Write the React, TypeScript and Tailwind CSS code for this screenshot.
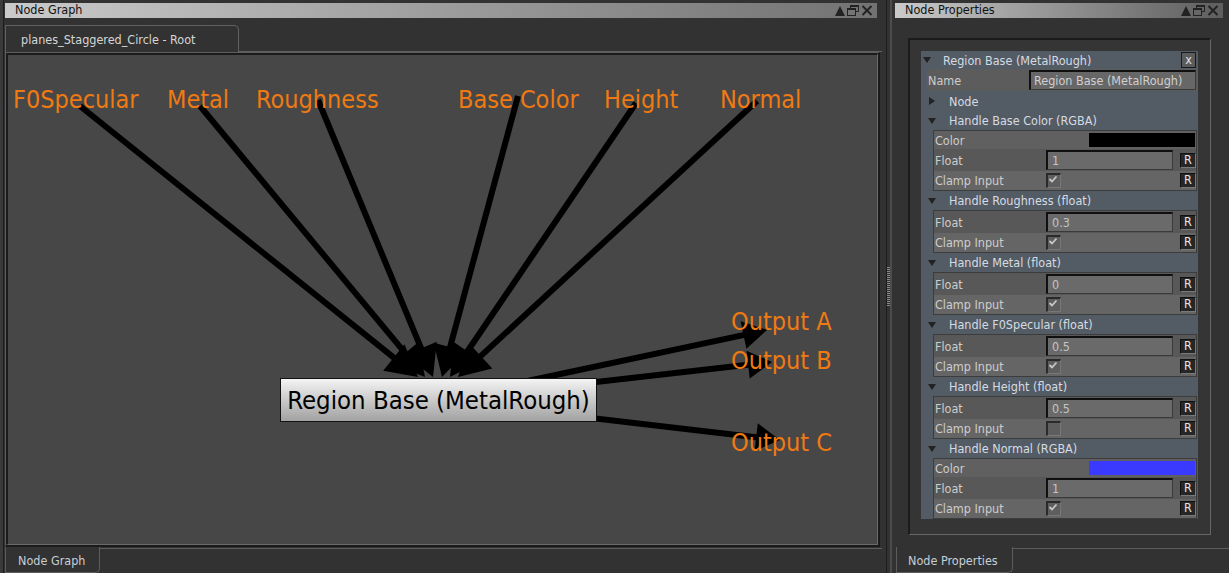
import React from "react";

const FONT = "font-['DejaVu_Sans_Condensed','DejaVu_Sans',sans-serif] font-stretch-condensed";

type Pt = [number, number];

function Arrow({ from, to, len, half }: { from: Pt; to: Pt; len: number; half: number }) {
    const dx = to[0] - from[0];
    const dy = to[1] - from[1];
    const d = Math.hypot(dx, dy);
    const ux = dx / d;
    const uy = dy / d;
    const bx = to[0] - ux * len;
    const by = to[1] - uy * len;
    const pts = `${to[0]},${to[1]} ${bx - uy * half},${by + ux * half} ${bx + uy * half},${by - ux * half}`;
    return (
        <g>
            <line x1={from[0]} y1={from[1]} x2={bx + ux * 2} y2={by + uy * 2} stroke="#000" strokeWidth={6} />
            <polygon points={pts} fill="#000" />
        </g>
    );
}

const inputs: [Pt, Pt][] = [
    [[80, 106], [418, 377]],
    [[200, 106], [425, 377]],
    [[318, 100], [433, 377]],
    [[518, 96], [442, 377]],
    [[636, 103], [450, 377]],
    [[757, 101], [458, 377]],
];

const outputs: Pt[] = [
    [767, 330],
    [772, 362],
    [780, 440],
];

function TitleIcons() {
    return (
        <div className="flex items-center gap-[2px]">
            <svg width="10" height="10" viewBox="0 0 10 10">
                <path d="M0 10 L5 0 L10 10 Z" fill="#222" />
            </svg>
            <svg width="12" height="11" viewBox="0 0 12 11">
                <path d="M3.5 3 V0.5 H11.5 V6.5 H8.5" fill="none" stroke="#222" />
                <rect x="3" y="0" width="9" height="2" fill="#222" />
                <rect x="0.5" y="3.5" width="8" height="7" fill="none" stroke="#222" />
                <rect x="0" y="3" width="9" height="2" fill="#222" />
            </svg>
            <svg width="12" height="11" viewBox="0 0 12 11">
                <path d="M1.5 1 L10.5 10 M10.5 1 L1.5 10" stroke="#222" strokeWidth="2" />
            </svg>
        </div>
    );
}

function TitleBar({ title, className }: { title: string; className: string }) {
    return (
        <div className={`h-[15px] flex items-center justify-between pl-[10px] pr-[4px] bg-linear-to-r from-[#cacaca] ${className}`}>
            <span className="text-[12.5px] leading-none text-[#111]">{title}</span>
            <TitleIcons />
        </div>
    );
}

function Down() {
    return (
        <svg width="8" height="6" viewBox="0 0 8 6">
            <path d="M0 0 H8 L4 6 Z" fill="#222" />
        </svg>
    );
}

function Right() {
    return (
        <svg width="6" height="8" viewBox="0 0 6 8">
            <path d="M0 0 L6 4 L0 8 Z" fill="#222" />
        </svg>
    );
}

function RButton() {
    return (
        <div className="ml-[7px] w-[16px] h-[15px] bg-[#262626] border border-t-[#111] border-l-[#111] border-r-[#7a7a7a] border-b-[#7a7a7a] flex items-center justify-center text-[#e4e4e4] leading-none">
            R
        </div>
    );
}

function FloatRow({ value }: { value: string }) {
    return (
        <div className="h-[22px] flex items-center bg-[#585858]">
            <span className="w-[112px] pl-px pt-[2px] text-[#cdcdcd]">Float</span>
            <div className="w-[127px] h-[20px] bg-[#6a6a6a] border-t-2 border-l-2 border-r border-b border-t-[#101010] border-l-[#101010] border-r-[#3a3a3a] border-b-[#3a3a3a] pl-[4px] pt-px flex items-center text-[#c4c4c4]">
                {value}
            </div>
            <RButton />
        </div>
    );
}

function ClampRow({ on }: { on: boolean }) {
    return (
        <div className="h-[19px] flex items-center bg-[#656565]">
            <span className="w-[112px] pl-px pt-[2px] text-[#cdcdcd]">Clamp Input</span>
            <div className="w-[15px] h-[15px] bg-[#5e5e5e] border-t-2 border-l-2 border-r border-b border-t-[#2a2a2a] border-l-[#2a2a2a] border-r-[#777] border-b-[#777]">
                {on && (
                    <svg width="11" height="11" viewBox="0 0 11 11">
                        <path d="M1.5 4 L4 6.5 L8.5 1.5" fill="none" stroke="#c8c8c8" strokeWidth="1.8" />
                    </svg>
                )}
            </div>
            <div className="flex-1" />
            <RButton />
        </div>
    );
}

function ColorRow({ color }: { color: string }) {
    return (
        <div className="h-[18px] flex items-center bg-[#606060]">
            <span className="pl-px pt-[2px] text-[#cdcdcd]">Color</span>
            <div className={`ml-auto mr-px w-[106px] h-[14px] ${color}`} />
        </div>
    );
}

function Group({ title, children }: { title: string; children: React.ReactNode }) {
    return (
        <>
            <div className="h-[19px] flex items-center">
                <div className="w-[28px] pl-[7px] flex items-center">
                    <Down />
                </div>
                <span className="pt-[2px] text-[#d6dbe1]">{title}</span>
            </div>
            <div className="ml-[12px] mr-px border border-[#3c3c3c] flex flex-col">{children}</div>
        </>
    );
}

function GraphCanvas() {
    const label = "absolute text-[25px] leading-[25px] text-[#f07a12] whitespace-nowrap";
    return (
        <div className="relative flex-1 bg-[#474747] overflow-hidden">
            <svg className="absolute inset-0" width="869" height="489">
                <g transform="translate(-8 -55)">
                    {inputs.map(([a, b], i) => (
                        <Arrow key={i} from={a} to={b} len={31} half={17} />
                    ))}
                    {outputs.map((b, i) => (
                        <Arrow key={i} from={[438, 400]} to={b} len={24} half={14} />
                    ))}
                </g>
            </svg>

            <div className={`${label} left-[5px] top-[32px]`}>F0Specular</div>
            <div className={`${label} left-[159px] top-[32px]`}>Metal</div>
            <div className={`${label} left-[248px] top-[32px]`}>Roughness</div>
            <div className={`${label} left-[450px] top-[32px]`}>Base Color</div>
            <div className={`${label} left-[596px] top-[32px]`}>Height</div>
            <div className={`${label} left-[712px] top-[32px]`}>Normal</div>
            <div className={`${label} left-[723px] top-[254px]`}>Output A</div>
            <div className={`${label} left-[723px] top-[293px]`}>Output B</div>
            <div className={`${label} left-[723px] top-[375px]`}>Output C</div>

            <div className="absolute left-[272px] top-[323px] w-[317px] h-[44px] border border-[#111] bg-linear-to-b from-[#f4f4f4] to-[#a2a2a2] flex items-center justify-center text-[25.5px] leading-[25px] text-black whitespace-nowrap">
                Region Base (MetalRough)
            </div>
        </div>
    );
}

export default function App() {
    return (
        <div className={`w-[1229px] h-[573px] flex bg-[#323232] overflow-hidden text-[12.5px] ${FONT}`}>
            {/* node graph panel */}
            <div className="w-[882px] h-full flex border-l-[3px] border-l-[#3a3a3a]">
                <div className="flex-1 flex flex-col border-l border-l-[#1d1d1d] pl-px">
                    <TitleBar title="Node Graph" className="mt-[3px] w-[872px] to-[#727272]" />
                    <div className="mt-[7px] h-[27px] flex">
                        <div className="w-[234px] border-t border-l border-r border-t-[#606060] border-l-[#606060] border-r-[#606060] rounded-tr-[5px] pl-[15px] pt-[2px] flex items-center text-[#d6d6d6]">
                            planes_Staggered_Circle - Root
                        </div>
                        <div className="flex-1 border-b border-b-[#606060]" />
                    </div>
                    <div className="w-[875px] h-[495px] flex border-t border-l border-r-2 border-b-2 border-t-[#5e5e5e] border-l-[#5e5e5e] border-r-[#1b1b1b] border-b-[#1b1b1b]">
                        <div className="flex-1 flex border-t-2 border-l-2 border-r border-b border-t-[#1b1b1b] border-l-[#1b1b1b] border-r-[#6a6a6a] border-b-[#6a6a6a]">
                            <GraphCanvas />
                        </div>
                    </div>
                    <div className="h-[26px] flex">
                        <div className="w-[95px] border-l border-r border-b border-l-[#5c5c5c] border-r-[#5c5c5c] border-b-[#5c5c5c] rounded-br-[5px] pl-[12px] pt-[3px] flex items-center text-[#c6ced8]">
                            Node Graph
                        </div>
                        <div className="flex-1 mt-px border-t border-t-[#5c5c5c]" />
                    </div>
                </div>
            </div>

            {/* splitter */}
            <div className="w-[13px] h-full flex justify-center">
                <div className="w-[6px] h-full border-l border-r-2 border-l-[#1c1c1c] border-r-[#4c4c4c] flex items-center justify-center">
                    <div className="w-[3px] flex flex-col gap-px">
                        {Array.from({ length: 20 }).map((_, i) => (
                            <div key={i} className="h-px bg-[#8a8a8a]" />
                        ))}
                    </div>
                </div>
            </div>

            {/* node properties panel */}
            <div className="w-[334px] h-full flex flex-col">
                <TitleBar title="Node Properties" className="mt-[3px] w-[328px] to-[#5e5e5e]" />
                <div className="mt-[20px] ml-[13px] w-[303px] h-[497px] bg-[#353535] border-t-2 border-l-2 border-r border-b border-t-[#1b1b1b] border-l-[#1b1b1b] border-r-[#666] border-b-[#666] pl-[11px] pt-[11px]">
                    <div className="w-[277px] bg-[#535b65] flex flex-col">
                        <div className="h-[18px] flex items-center">
                            <div className="w-[22px] pl-[2px] flex items-center">
                                <Down />
                            </div>
                            <span className="flex-1 pt-[2px] text-[#d6dbe1]">Region Base (MetalRough)</span>
                            <div className="mr-[2px] w-[15px] h-[16px] bg-[#5c5c5c] border border-[#1a1a1a] flex items-center justify-center leading-none text-[#e0e0e0]">
                                x
                            </div>
                        </div>
                        <div className="h-[22px] ml-[6px] bg-[#5c5c5c] flex items-center">
                            <span className="w-[102px] pl-px pt-[2px] text-[#cdcdcd]">Name</span>
                            <div className="w-[167px] h-[20px] bg-[#676767] border-t-2 border-l-2 border-r border-b border-t-[#101010] border-l-[#101010] border-r-[#3a3a3a] border-b-[#3a3a3a] pl-[3px] pt-px flex items-center text-[#d0d0d0] whitespace-nowrap">
                                Region Base (MetalRough)
                            </div>
                        </div>
                        <div className="h-[20px] flex items-center">
                            <div className="w-[28px] pl-[8px] flex items-center">
                                <Right />
                            </div>
                            <span className="pt-[2px] text-[#d6dbe1]">Node</span>
                        </div>
                        <Group title="Handle Base Color (RGBA)">
                            <ColorRow color="bg-black" />
                            <FloatRow value="1" />
                            <ClampRow on />
                        </Group>
                        <Group title="Handle Roughness (float)">
                            <FloatRow value="0.3" />
                            <ClampRow on />
                        </Group>
                        <Group title="Handle Metal (float)">
                            <FloatRow value="0" />
                            <ClampRow on />
                        </Group>
                        <Group title="Handle F0Specular (float)">
                            <FloatRow value="0.5" />
                            <ClampRow on />
                        </Group>
                        <Group title="Handle Height (float)">
                            <FloatRow value="0.5" />
                            <ClampRow on={false} />
                        </Group>
                        <Group title="Handle Normal (RGBA)">
                            <ColorRow color="bg-[#3a3aff]" />
                            <FloatRow value="1" />
                            <ClampRow on />
                        </Group>
                    </div>
                </div>
                <div className="mt-[12px] h-[26px] flex">
                    <div className="ml-px w-[117px] border-l border-r border-b border-l-[#5c5c5c] border-r-[#5c5c5c] border-b-[#5c5c5c] rounded-br-[5px] pl-[11px] pt-[3px] flex items-center text-[#c6ced8]">
                        Node Properties
                    </div>
                    <div className="flex-1 mt-px border-t border-t-[#5c5c5c]" />
                </div>
            </div>
        </div>
    );
}
